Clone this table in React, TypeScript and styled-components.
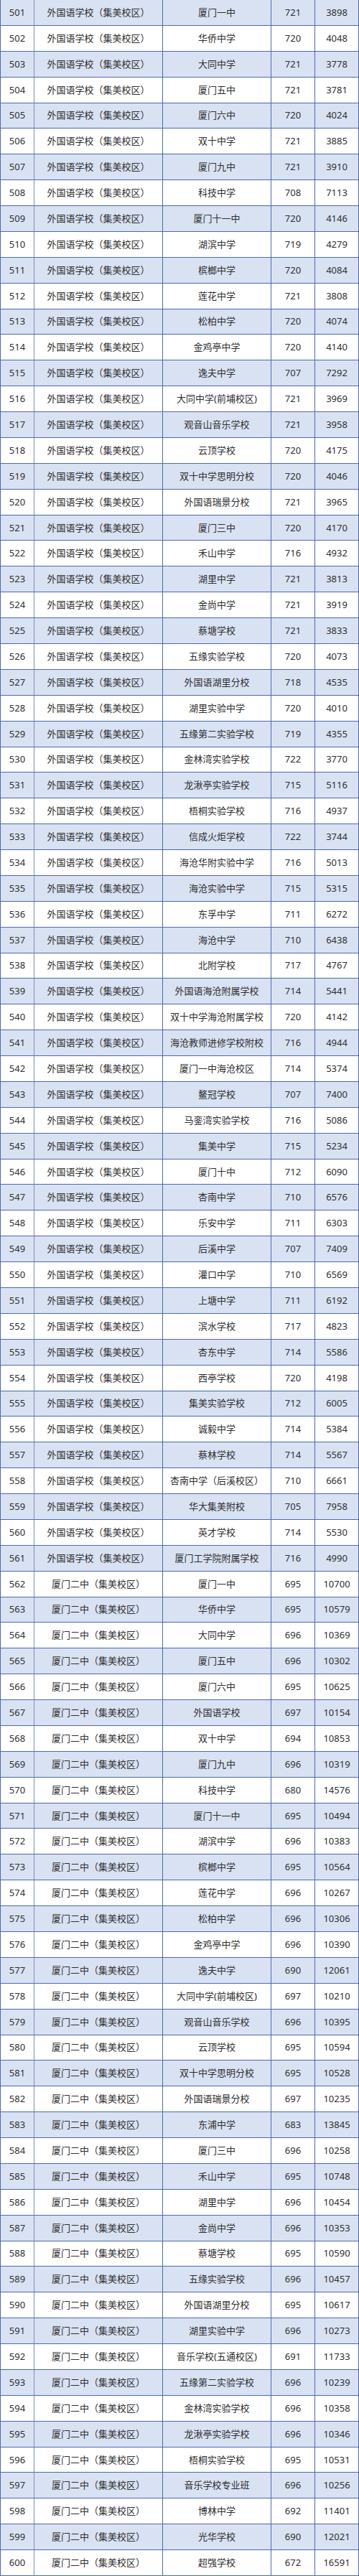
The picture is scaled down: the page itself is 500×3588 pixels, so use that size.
import React from "react";
import styled, { createGlobalStyle } from "styled-components";

const Global = createGlobalStyle`
  html, body { margin: 0; padding: 0; background: #ffffff; }
  body { font-family: "Noto Sans", "Noto Sans CJK SC", sans-serif; }
`;

const Table = styled.div`
  width: 500px;
  height: 3588px;
  display: grid;
  grid-template-columns: 48px 179px 151px 61px 61px;
  grid-template-rows: repeat(100, 1fr);
  box-sizing: border-box;
  color: #2e2e2e;
  font-size: 13px;
`;

const Row = styled.div<{ $shaded: boolean }>`
  display: contents;
  & > div {
    background: ${(p) => (p.$shaded ? "#d9e2f3" : "#ffffff")};
  }
`;

const Cell = styled.div<{ $first?: boolean; $divider?: string }>`
  display: flex;
  align-items: center;
  justify-content: center;
  box-sizing: border-box;
  border-bottom: 1px solid #4d69ad;
  border-right: 1px solid ${(p) => p.$divider ?? "#4d69ad"};
  border-left: ${(p) => (p.$first ? "1px solid #4d69ad" : "none")};
  white-space: nowrap;
  line-height: 1;
  letter-spacing: 0;
`;

type Rec = [string, string, string];

const WGY = "外国语学校（集美校区）";
const EZ = "厦门二中（集美校区）";

const data: Rec[] = [
  ["厦门一中", "721", "3898"],
  ["华侨中学", "720", "4048"],
  ["大同中学", "721", "3778"],
  ["厦门五中", "721", "3781"],
  ["厦门六中", "720", "4024"],
  ["双十中学", "721", "3885"],
  ["厦门九中", "721", "3910"],
  ["科技中学", "708", "7113"],
  ["厦门十一中", "720", "4146"],
  ["湖滨中学", "719", "4279"],
  ["槟榔中学", "720", "4084"],
  ["莲花中学", "721", "3808"],
  ["松柏中学", "720", "4074"],
  ["金鸡亭中学", "720", "4140"],
  ["逸夫中学", "707", "7292"],
  ["大同中学(前埔校区)", "721", "3969"],
  ["观音山音乐学校", "721", "3958"],
  ["云顶学校", "720", "4175"],
  ["双十中学思明分校", "720", "4046"],
  ["外国语瑞景分校", "721", "3965"],
  ["厦门三中", "720", "4170"],
  ["禾山中学", "716", "4932"],
  ["湖里中学", "721", "3813"],
  ["金尚中学", "721", "3919"],
  ["蔡塘学校", "721", "3833"],
  ["五缘实验学校", "720", "4073"],
  ["外国语湖里分校", "718", "4535"],
  ["湖里实验中学", "720", "4010"],
  ["五缘第二实验学校", "719", "4355"],
  ["金林湾实验学校", "722", "3770"],
  ["龙湫亭实验学校", "715", "5116"],
  ["梧桐实验学校", "716", "4937"],
  ["信成火炬学校", "722", "3744"],
  ["海沧华附实验中学", "716", "5013"],
  ["海沧实验中学", "715", "5315"],
  ["东孚中学", "711", "6272"],
  ["海沧中学", "710", "6438"],
  ["北附学校", "717", "4767"],
  ["外国语海沧附属学校", "714", "5441"],
  ["双十中学海沧附属学校", "720", "4142"],
  ["海沧教师进修学校附校", "716", "4944"],
  ["厦门一中海沧校区", "714", "5374"],
  ["鳌冠学校", "707", "7400"],
  ["马銮湾实验学校", "716", "5086"],
  ["集美中学", "715", "5234"],
  ["厦门十中", "712", "6090"],
  ["杏南中学", "710", "6576"],
  ["乐安中学", "711", "6303"],
  ["后溪中学", "707", "7409"],
  ["灌口中学", "710", "6569"],
  ["上塘中学", "711", "6192"],
  ["滨水学校", "717", "4823"],
  ["杏东中学", "714", "5586"],
  ["西亭学校", "720", "4198"],
  ["集美实验学校", "712", "6005"],
  ["诚毅中学", "714", "5384"],
  ["蔡林学校", "714", "5567"],
  ["杏南中学（后溪校区）", "710", "6661"],
  ["华大集美附校", "705", "7958"],
  ["英才学校", "714", "5530"],
  ["厦门工学院附属学校", "716", "4990"],
  ["厦门一中", "695", "10700"],
  ["华侨中学", "695", "10579"],
  ["大同中学", "696", "10369"],
  ["厦门五中", "696", "10302"],
  ["厦门六中", "695", "10625"],
  ["外国语学校", "697", "10154"],
  ["双十中学", "694", "10853"],
  ["厦门九中", "696", "10319"],
  ["科技中学", "680", "14576"],
  ["厦门十一中", "695", "10494"],
  ["湖滨中学", "696", "10383"],
  ["槟榔中学", "695", "10564"],
  ["莲花中学", "696", "10267"],
  ["松柏中学", "696", "10306"],
  ["金鸡亭中学", "696", "10390"],
  ["逸夫中学", "690", "12061"],
  ["大同中学(前埔校区)", "697", "10210"],
  ["观音山音乐学校", "696", "10395"],
  ["云顶学校", "695", "10594"],
  ["双十中学思明分校", "695", "10528"],
  ["外国语瑞景分校", "697", "10235"],
  ["东浦中学", "683", "13845"],
  ["厦门三中", "696", "10258"],
  ["禾山中学", "695", "10748"],
  ["湖里中学", "696", "10454"],
  ["金尚中学", "696", "10353"],
  ["蔡塘学校", "695", "10590"],
  ["五缘实验学校", "696", "10457"],
  ["外国语湖里分校", "695", "10617"],
  ["湖里实验中学", "696", "10273"],
  ["音乐学校(五通校区)", "691", "11733"],
  ["五缘第二实验学校", "696", "10239"],
  ["金林湾实验学校", "696", "10358"],
  ["龙湫亭实验学校", "696", "10346"],
  ["梧桐实验学校", "695", "10531"],
  ["音乐学校专业班", "696", "10256"],
  ["博林中学", "692", "11401"],
  ["光华学校", "690", "12021"],
  ["超强学校", "672", "16591"],
];

export default function App() {
  return (
    <>
      <Global />
      <Table>
        {data.map(([school, score, rank], i) => {
          const no = 501 + i;
          const from = no <= 561 ? WGY : EZ;
          return (
            <Row key={no} $shaded={i % 2 === 0}>
              <Cell $first $divider="#7d8db3">{no}</Cell>
              <Cell>{from}</Cell>
              <Cell>{school}</Cell>
              <Cell>{score}</Cell>
              <Cell>{rank}</Cell>
            </Row>
          );
        })}
      </Table>
    </>
  );
}
